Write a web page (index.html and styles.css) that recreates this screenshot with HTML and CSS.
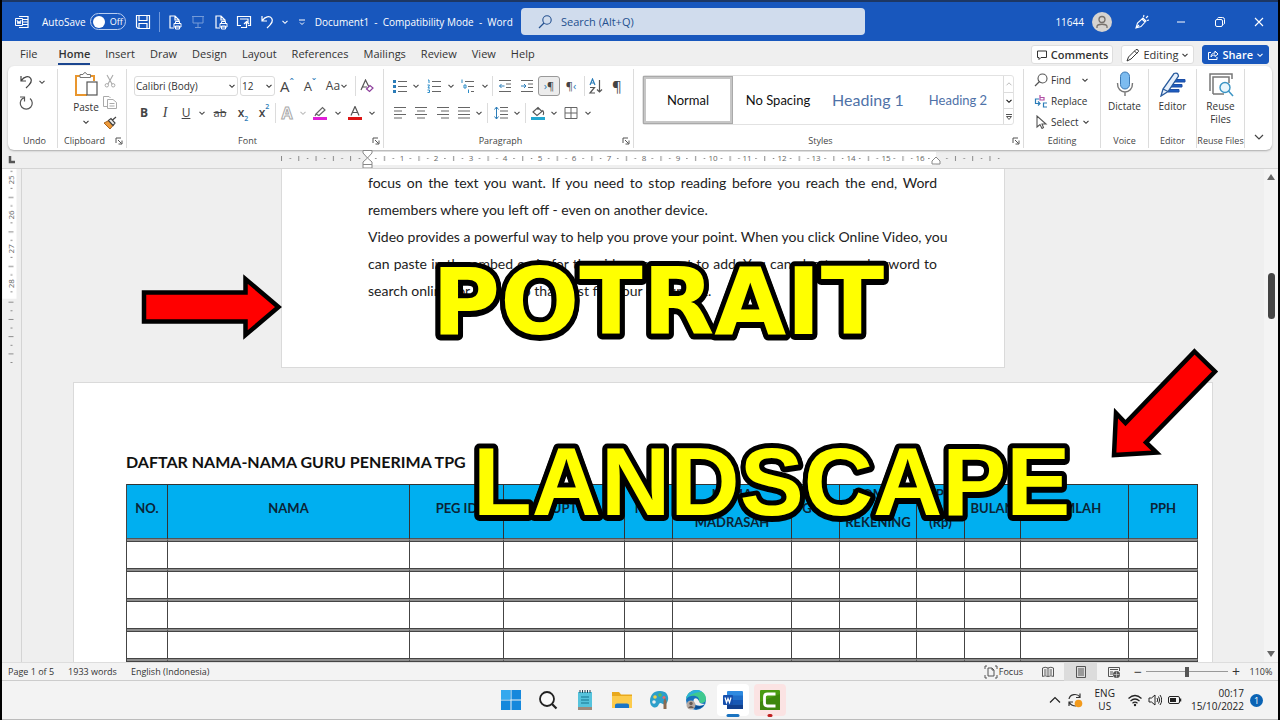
FILE: index.html
```html
<!DOCTYPE html>
<html lang="en">
<head>
<meta charset="utf-8">
<title>Document1 - Compatibility Mode - Word</title>
<link rel="stylesheet" href="styles.css">
</head>
<body>
<svg class="defs" aria-hidden="true">
  <symbol id="chev" viewBox="0 0 8 8"><path d="M1.500 2.800 4 5.300 6.500 2.800" fill="none" stroke="currentColor" stroke-width="1.100"/></symbol>
  <symbol id="launch" viewBox="0 0 8 8"><path d="M1 6V1H6M3 3 6.500 6.500M7 3.500V7H3.500" fill="none" stroke="#555"/></symbol>
  <symbol id="undo" viewBox="0 0 16 16"><path d="M3 2V7H8M3.300 6.600C6 2.500 10.500 1.500 12.700 4.300 14.600 7 13 9.500 8 14" fill="none" stroke="currentColor" stroke-width="1.200"/></symbol>
  <symbol id="page-print" viewBox="0 0 16 16"><path d="M7 14H3V2H8L12 6V8M8 2V6H12" fill="none" stroke="currentColor" stroke-width="1.200"/><path d="M7 9.500H14V13H7ZM8.500 9V7.500H12.500V9M8.500 12H12.500V15H8.500Z" fill="#1857bd" stroke="currentColor"/></symbol>
</svg>
<div class="window">
  <header class="titlebar">
    <div class="title-left">
      <svg class="i16" viewBox="0 0 16 16"><path d="M5 2.500H14V13.500H5M8 5.500H14M8 8H14M8 10.500H14" fill="none" stroke="#fff" stroke-width="1.200"/><path d="M1.500 4.500H8.500V11.500H1.500Z" fill="#1857bd" stroke="#fff"/><path d="M3 6 4 10 5 7 6 10 7 6" fill="none" stroke="#fff"/></svg>
      <label class="autosave">AutoSave<span class="toggle"><input type="checkbox" role="switch"><i></i>Off</span></label>
      <button class="tb" aria-label="Save"><svg class="i16" viewBox="0 0 16 16"><path d="M1.500 1.500H14.500V14.500H3L1.500 13ZM4 1.500V6.500H12V1.500M4 14V9.500H12V14" fill="none" stroke="#fff" stroke-width="1.200"/></svg></button>
      <span class="tsep"></span>
      <button class="tb" aria-label="Quick print"><svg class="i16"><use href="#page-print"/></svg></button>
      <button class="tb dim" aria-label="Present"><svg class="i16" viewBox="0 0 16 16"><path d="M2 2.500H14M3 2.500V9H13V2.500M8 9V13M5 13.500H11" fill="none" stroke="#fff"/></svg></button>
      <button class="tb" aria-label="Print preview"><svg class="i16"><use href="#page-print"/></svg></button>
      <button class="tb" aria-label="Switch window"><svg class="i16" viewBox="0 0 16 16"><path d="M5 11.500H1.500V2.500H14.500V11.500H12M4 5H12V9M5 13.500H10.500V8M8 10 10.500 7.500 13 10" fill="none" stroke="#fff" stroke-width="1.200"/></svg></button>
      <button class="tb" aria-label="Undo"><svg class="i16"><use href="#undo"/></svg></button>
      <button class="tb narrow" aria-label="Undo list"><svg class="i8"><use href="#chev"/></svg></button>
      <button class="tb" aria-label="Customize toolbar"><svg class="i8" viewBox="0 0 8 8"><path d="M1 2H7M2 4.500 4 6.500 6 4.500" fill="none" stroke="#fff"/></svg></button>
      <span class="doc-title">Document1&nbsp; -&nbsp; Compatibility Mode&nbsp; -&nbsp; Word</span>
    </div>
    <label class="search"><svg class="i16" viewBox="0 0 16 16"><circle cx="10" cy="6" r="4.200" fill="none" stroke="#24508f" stroke-width="1.100"/><path d="M7 9 2 14" stroke="#24508f" stroke-width="1.200"/></svg><input type="search" placeholder="Search (Alt+Q)" aria-label="Search"></label>
    <div class="title-right">
      <span class="user">11644</span>
      <svg class="avatar" viewBox="0 0 20 20"><circle cx="10" cy="10" r="10" fill="#d6d3d0"/><circle cx="10" cy="7.500" r="3" fill="none" stroke="#77716c" stroke-width="1.300"/><path d="M5 16V14.500C5 11.500 15 11.500 15 14.500V16" fill="none" stroke="#77716c" stroke-width="1.300"/></svg>
      <button class="win" aria-label="Coming soon"><svg class="i16" viewBox="0 0 16 16"><path d="M2 14 3.500 9 9 4 12 7 7 12.500ZM2 14 5 11M8 5 11 8M9.500 3 10 1M12 4 14 2M13 6.500 15 6" fill="none" stroke="#fff" stroke-width="1.100"/></svg></button>
      <button class="win" aria-label="Minimize"><svg class="i10" viewBox="0 0 10 10"><path d="M1 5H9" stroke="#fff"/></svg></button>
      <button class="win" aria-label="Restore"><svg class="i10" viewBox="0 0 10 10"><rect x=".5" y="2.500" width="7" height="7" rx="1.500" fill="none" stroke="#fff"/><path d="M2.500 1.500C3 .5 3 .5 4 .5H7.500Q9.500 .5 9.500 2.500V6Q9.500 7 8.500 7.500" fill="none" stroke="#fff"/></svg></button>
      <button class="win" aria-label="Close"><svg class="i10" viewBox="0 0 10 10"><path d="M1 1 9 9M9 1 1 9" stroke="#fff" stroke-width="1.100"/></svg></button>
    </div>
  </header>

  <nav class="tabs">
    <button>File</button><button class="active">Home</button><button>Insert</button><button>Draw</button><button>Design</button><button>Layout</button><button>References</button><button>Mailings</button><button>Review</button><button>View</button><button>Help</button>
    <div class="tab-actions">
      <button class="pill strong"><svg class="i12" viewBox="0 0 12 12"><path d="M1.500 2H10.500V8.500H5L3 10.500V8.500H1.500Z" fill="none" stroke="#333"/></svg>Comments</button>
      <button class="pill"><svg class="i14" viewBox="0 0 14 14"><path d="M1 13 2.500 9 10 1.500Q12.500 1 12.500 3.500L5 11ZM8.500 3 11 5.500" fill="none" stroke="#333"/></svg>Editing<svg class="i8"><use href="#chev"/></svg></button>
      <button class="pill share"><svg class="i12" viewBox="0 0 12 12"><path d="M4 3.500H1.500V10.500H10V8M4 8C4 5 6 4 8 4V2L11 5 8 7.500V6C6 6 5 6.500 4 8Z" fill="none" stroke="#fff"/></svg>Share<svg class="i8"><use href="#chev"/></svg></button>
    </div>
  </nav>

  <section class="ribbon">
    <div class="group g-undo">
      <div class="body col">
        <div class="line"><button class="ic" aria-label="Undo"><svg class="i16"><use href="#undo"/></svg></button><button class="ic" aria-label="Undo list"><svg class="i8"><use href="#chev"/></svg></button></div>
        <div class="line"><button class="ic" aria-label="Repeat"><svg class="i16" viewBox="0 0 16 16"><path d="M2 2H6.500V6.500M12 3.500A6 6 0 1 1 4.500 3.500L6.500 3" fill="none" stroke="#555" stroke-width="1.200"/></svg></button></div>
      </div>
      <div class="name">Undo</div>
    </div>
    <div class="group g-clip">
      <div class="body row">
        <button class="big"><svg class="i26" viewBox="0 0 26 26"><path d="M8 5H3V24H14M18 5H21V10" fill="none" stroke="#e9962e" stroke-width="2"/><path d="M7 6.500V3.500H10Q12 -.5 14 3.500H17.500V6.500Z" fill="#fff" stroke="#777"/><rect x="14" y="11" width="10" height="13" fill="#fff" stroke="#555" stroke-width="1.200"/></svg><span>Paste</span><svg class="i8"><use href="#chev"/></svg></button>
        <div class="clip-col">
          <button class="ic" aria-label="Cut"><svg class="i14" viewBox="0 0 14 14"><path d="M4 1 9 10M10 1 5 10" stroke="#aaa" stroke-width="1.100"/><circle cx="3.800" cy="11.300" r="1.700" fill="none" stroke="#aaa"/><circle cx="10.200" cy="11.300" r="1.700" fill="none" stroke="#aaa"/></svg></button>
          <button class="ic" aria-label="Copy"><svg class="i14" viewBox="0 0 14 14"><path d="M4.500 11.500H.5V1.500H6L7.500 3M4.500 4.500H10L13.500 7.500V13.500H4.500ZM6.500 8.500H11.500M6.500 11H11.500" fill="none" stroke="#aaa"/></svg></button>
          <button class="ic" aria-label="Format painter"><svg class="i14" viewBox="0 0 14 14"><path d="M1 7 6 4.500 10 9.500 7 13Z" fill="#ee9a3a" stroke="#a8631b"/><path d="M5.500 4.500 8 2.500 12 7 10 9.500ZM9.500 4 13 1" fill="#eee" stroke="#444" stroke-width="1.200"/></svg></button>
        </div>
      </div>
      <div class="name has-launch">Clipboard<svg class="launch"><use href="#launch"/></svg></div>
    </div>
    <div class="group g-font">
      <div class="body col">
        <div class="line f1">
          <span class="combo"><select aria-label="Font"><option>Calibri (Body)</option></select><svg class="i8"><use href="#chev"/></svg></span>
          <span class="combo"><select aria-label="Font size"><option>12</option></select><svg class="i8"><use href="#chev"/></svg></span>
          <button class="ic t15">A<sup>ˆ</sup></button><button class="ic t13">A<sup>ˇ</sup></button>
          <button class="ic">Aa<svg class="i8"><use href="#chev"/></svg></button><span class="sep"></span>
          <button class="ic" aria-label="Clear formatting"><svg class="i14" viewBox="0 0 14 14"><path d="M1 11 5.500 1 9 8M2.500 8H7" fill="none" stroke="#555" stroke-width="1.200"/><path d="M6.500 10 10 6.500 13 9 9.500 12.500Z" fill="#fff" stroke="#8d3f9c" stroke-width="1.200"/></svg></button>
        </div>
        <div class="line f2">
          <button class="ic"><b>B</b></button><button class="ic serif"><em>I</em></button><button class="ic"><u>U</u></button><button class="ic" aria-label="Underline list"><svg class="i8"><use href="#chev"/></svg></button>
          <button class="ic"><s>ab</s></button><button class="ic semi">x<sub>2</sub></button><button class="ic semi">x<sup>2</sup></button><span class="sep"></span>
          <button class="ic outline">A</button><button class="ic pale" aria-label="Effects list"><svg class="i8"><use href="#chev"/></svg></button>
          <button class="ic" aria-label="Highlight"><svg class="i14" viewBox="0 0 14 14"><path d="M3 8 9.500 1.500 12 4 6 9.500ZM3 8 2 10" fill="none" stroke="#666" stroke-width="1.200"/><path d="M0 11H14V14H0Z" fill="#e01ed8"/></svg></button><button class="ic" aria-label="Highlight list"><svg class="i8"><use href="#chev"/></svg></button>
          <button class="ic" aria-label="Font color"><svg class="i14" viewBox="0 0 14 14"><path d="M3 9.500 7 .5 11 9.500M4.500 6.500H9.500" fill="none" stroke="#555" stroke-width="1.200"/><path d="M0 11H14V14H0Z" fill="#dc1414"/></svg></button><button class="ic" aria-label="Color list"><svg class="i8"><use href="#chev"/></svg></button>
        </div>
      </div>
      <div class="name has-launch">Font<svg class="launch"><use href="#launch"/></svg></div>
    </div>
    <div class="group g-para">
      <div class="body col">
        <div class="line p1">
          <button class="ic" aria-label="Bullets"><svg class="i14" viewBox="0 0 14 14"><path d="M5 2.500H14M5 7.500H14M5 12.500H14" stroke="#666"/><path d="M0 1H3V4H0ZM0 6H3V9H0ZM0 11H3V14H0Z" fill="#2b7cb8"/></svg></button><button class="ic" aria-label="Bullets list"><svg class="i8"><use href="#chev"/></svg></button>
          <button class="ic" aria-label="Numbering"><svg class="i14" viewBox="0 0 14 14"><path d="M5 2.500H14M5 7.500H14M5 12.500H14" stroke="#666"/><path d="M1 1H2V4M.5 6H2.500L1 9H3M.5 11H2.500V13.500H.5" fill="none" stroke="#2b8cc8"/></svg></button><button class="ic" aria-label="Numbering list"><svg class="i8"><use href="#chev"/></svg></button>
          <button class="ic" aria-label="Multilevel"><svg class="i14" viewBox="0 0 14 14"><path d="M4 2.500H13M7 7.500H13M10 12.500H13" stroke="#666"/><path d="M1 .5V4M3 6H5V9H3ZM7.500 10.500V14" fill="none" stroke="#2b8cc8"/></svg></button><button class="ic" aria-label="Multilevel list"><svg class="i8"><use href="#chev"/></svg></button>
          <span class="sep"></span>
          <button class="ic" aria-label="Decrease indent"><svg class="i14" viewBox="0 0 14 14"><path d="M1 1.500H13M8 5H13M8 8.500H13M1 12.500H13" stroke="#666"/><path d="M6.500 7H1.500M3.500 5 1.500 7 3.500 9" fill="none" stroke="#2b7cb8"/></svg></button>
          <button class="ic" aria-label="Increase indent"><svg class="i14" viewBox="0 0 14 14"><path d="M1 1.500H13M8 5H13M8 8.500H13M1 12.500H13" stroke="#666"/><path d="M1 7H6M4 5 6 7 4 9" fill="none" stroke="#2b7cb8"/></svg></button>
          <button class="ic pressed"><span class="blue">›</span>¶</button>
          <button class="ic small">¶<span class="blue">‹</span></button><span class="sep"></span>
          <button class="ic" aria-label="Sort"><svg class="i16" viewBox="0 0 16 16"><path d="M2 7 4.500 1 7 7M3 5H6" fill="none" stroke="#2b7cb8" stroke-width="1.200"/><path d="M2 9.500H6.500L2 15H7M11.500 2V14M9 11.500 11.500 14 14 11.500" fill="none" stroke="#555" stroke-width="1.200"/></svg></button>
          <button class="ic t15">¶</button>
        </div>
        <div class="line p2">
          <button class="ic" aria-label="Align left"><svg class="i14" viewBox="0 0 14 14"><path d="M1 1.500H13M1 5H9M1 8.500H13M1 12H9" stroke="#666"/></svg></button>
          <button class="ic" aria-label="Center"><svg class="i14" viewBox="0 0 14 14"><path d="M1 1.500H13M3 5H11M1 8.500H13M3 12H11" stroke="#666"/></svg></button>
          <button class="ic" aria-label="Align right"><svg class="i14" viewBox="0 0 14 14"><path d="M1 1.500H13M5 5H13M1 8.500H13M5 12H13" stroke="#666"/></svg></button>
          <button class="ic" aria-label="Justify"><svg class="i14" viewBox="0 0 14 14"><path d="M1 1.500H13M1 5H13M1 8.500H13M1 12H13" stroke="#666"/></svg></button><button class="ic" aria-label="Justify list"><svg class="i8"><use href="#chev"/></svg></button>
          <span class="sep"></span>
          <button class="ic" aria-label="Line spacing"><svg class="i14" viewBox="0 0 14 14"><path d="M6 1.500H14M6 5H14M6 8.500H14M6 12H14" stroke="#666"/><path d="M2.500 1V13M.5 3.500 2.500 1 4.500 3.500M.5 10.500 2.500 13 4.500 10.500" fill="none" stroke="#2b7cb8"/></svg></button><button class="ic" aria-label="Spacing list"><svg class="i8"><use href="#chev"/></svg></button>
          <span class="sep"></span>
          <button class="ic" aria-label="Shading"><svg class="i14" viewBox="0 0 14 14"><path d="M2 6 7 1.500 11 5.500 6 9.500ZM7 1V4M11.500 4Q13.500 7 12 9" fill="none" stroke="#555" stroke-width="1.100"/><path d="M0 11H14V14H0Z" fill="#22a7d0"/></svg></button><button class="ic" aria-label="Shading list"><svg class="i8"><use href="#chev"/></svg></button>
          <button class="ic" aria-label="Borders"><svg class="i14" viewBox="0 0 14 14"><path d="M1 1.500H13V12.500H1ZM7 1.500V12.500M1 7H13" fill="none" stroke="#666"/></svg></button><button class="ic" aria-label="Borders list"><svg class="i8"><use href="#chev"/></svg></button>
        </div>
      </div>
      <div class="name has-launch">Paragraph<svg class="launch"><use href="#launch"/></svg></div>
    </div>
    <div class="group g-styles">
      <div class="body row">
        <div class="gallery">
          <button class="sel">Normal</button><button>No Spacing</button><button class="h1">Heading 1</button><button class="h2">Heading 2</button>
          <div class="spin"><button class="pale" aria-label="Up"><svg class="i8" viewBox="0 0 8 8"><path d="M1.500 5.300 4 2.800 6.500 5.300" fill="none" stroke="currentColor"/></svg></button><button aria-label="Down"><svg class="i8"><use href="#chev"/></svg></button><button aria-label="More"><svg class="i8" viewBox="0 0 8 8"><path d="M1 1.500H7M1.500 3.500H6.500L4 6.500Z" fill="none" stroke="#555"/></svg></button></div>
        </div>
      </div>
      <div class="name has-launch">Styles<svg class="launch"><use href="#launch"/></svg></div>
    </div>
    <div class="group g-edit">
      <div class="body col list">
        <button><svg class="i14" viewBox="0 0 14 14"><circle cx="8.500" cy="5.500" r="4.500" fill="none" stroke="#555" stroke-width="1.100"/><path d="M5.500 8.500 1 13" stroke="#555" stroke-width="1.200"/></svg>Find<svg class="i8 apart"><use href="#chev"/></svg></button>
        <button><svg class="i14" viewBox="0 0 14 14"><path d="M6 1V6H10V3.500H6" fill="none" stroke="#b04fa6" stroke-width="1.200"/><path d="M5 5H1.500V9.500H6M4 7.500 6 9.500 4 11.500M13 9H9.500V13H13" fill="none" stroke="#2b7cb8" stroke-width="1.200"/></svg>Replace</button>
        <button><svg class="i14" viewBox="0 0 14 14"><path d="M3 1V12L6 9.500 8 13.500 9.500 12.500 8 9H12Z" fill="none" stroke="#555" stroke-width="1.100"/></svg>Select<svg class="i8"><use href="#chev"/></svg></button>
      </div>
      <div class="name">Editing</div>
    </div>
    <div class="group g-tool">
      <div class="body col"><button class="big"><svg class="i26" viewBox="0 0 26 26"><rect x="8.500" y="1" width="9" height="17" rx="4.500" fill="#7dbcf0" stroke="#3b79b5"/><path d="M5.500 12C5 24 21 24 20.500 12M13 21V25" fill="none" stroke="#777" stroke-width="1.400"/></svg><span>Dictate</span></button></div>
      <div class="name">Voice</div>
    </div>
    <div class="group g-tool">
      <div class="body col"><button class="big"><svg class="i26" viewBox="0 0 26 26"><path d="M12 8.500H25V11H13ZM11 13.500H22V16H11ZM9 18.500H19V21H8Z" fill="#1d5cc0" stroke="#1d4ea5"/><path d="M1 25 3 18 14 2.500Q18 1 18.500 5L8 20.500ZM3 18 8 20.500" fill="#e7f0fb" stroke="#285a9c" stroke-width="1.300"/></svg><span>Editor</span></button></div>
      <div class="name">Editor</div>
    </div>
    <div class="group g-tool">
      <div class="body col"><button class="big"><svg class="i26" viewBox="0 0 26 26"><path d="M2 20V3H24V8M2 3H24M5 23V6H21V12M5 23H16" fill="none" stroke="#777" stroke-width="1.500"/><circle cx="17" cy="16.500" r="5" fill="#eaf6fc" stroke="#3a94c4" stroke-width="1.400"/><path d="M20.500 20 25 25" stroke="#3a94c4" stroke-width="1.500"/></svg><span>Reuse<br>Files</span></button></div>
      <div class="name">Reuse Files</div>
    </div>
    <button class="collapse" aria-label="Collapse ribbon"><svg class="i10" viewBox="0 0 10 10"><path d="M1 3 5 7 9 3" fill="none" stroke="#444" stroke-width="1.200"/></svg></button>
  </section>

  <div class="hruler">
    <svg class="corner" viewBox="0 0 20 18"><path d="M8 6V12H13" fill="none" stroke="#555" stroke-width="2.500"/></svg>
    <div class="hscale">
      <svg viewBox="0 0 724 18" width="724" height="18">
        <defs><pattern id="cm" x="86" width="34.570" height="18" patternUnits="userSpaceOnUse"><path d="M8 8.500H9.500M25.500 8.500H27" stroke="#888"/><path d="M17.500 6V11" stroke="#888"/></pattern>
        <pattern id="edge" x="0" width="17.280" height="18" patternUnits="userSpaceOnUse"><path d="M.5 6V11" stroke="#888"/><path d="M8.500 8.500H10" stroke="#888"/></pattern></defs>
        <rect x="86" y="2" width="569" height="13" fill="#fff"/>
        <rect x="0" width="82" height="18" fill="url(#edge)"/><rect x="92" width="558" height="18" fill="url(#cm)"/><rect x="660" width="59" height="18" fill="url(#edge)"/>
        <g class="nums"><text x="121" y="11">1</text><text x="155" y="11">2</text><text x="190" y="11">3</text><text x="224" y="11">4</text><text x="259" y="11">5</text><text x="293" y="11">6</text><text x="328" y="11">7</text><text x="363" y="11">8</text><text x="397" y="11">9</text><text x="432" y="11">10</text><text x="466" y="11">11</text><text x="501" y="11">12</text><text x="535" y="11">13</text><text x="570" y="11">14</text><text x="605" y="11">15</text><text x="639" y="11">16</text></g>
        <path d="M82 .5H91V3L86.500 8 82 3ZM82 18V12L86.500 8 91 12V18ZM82 14.500H91M651 14V11L655 7 659 11V14Z" fill="#fff" stroke="#888"/>
      </svg>
    </div>
  </div>

  <div class="work">
    <svg class="vruler" viewBox="0 0 20 494" preserveAspectRatio="xMidYMin slice">
      <defs><pattern id="vcm" y="11" width="20" height="34.570" patternUnits="userSpaceOnUse"><path d="M9 8.500H11M9 26H11M7 17.500H12" stroke="#888"/></pattern><pattern id="vedge" y="132" width="20" height="17.280" patternUnits="userSpaceOnUse"><path d="M7 1.500H12M9 10H11" stroke="#888"/></pattern></defs>
      <rect x="1" width="14" height="130" fill="#fff"/><rect width="20" height="128" fill="url(#vcm)"/><rect y="131" width="20" height="64" fill="url(#vedge)"/>
      <g class="nums"><text transform="translate(13 11) rotate(-90)">25</text><text transform="translate(13 46) rotate(-90)">26</text><text transform="translate(13 80) rotate(-90)">27</text><text transform="translate(13 115) rotate(-90)">28</text></g>
    </svg>
    <main class="canvas">
      <article class="page portrait">
        <p class="full">focus on the text you want. If you need to stop reading before you reach the end, Word</p>
        <p>remembers where you left off - even on another device.</p>
        <p class="full">Video provides a powerful way to help you prove your point. When you click Online Video, you</p>
        <p class="full">can paste in the embed code for the video you want to add. You can also type a keyword to</p>
        <p>search online for the video that best fits your document.</p>
      </article>
      <article class="page landscape">
        <h1>DAFTAR NAMA-NAMA GURU PENERIMA TPG</h1>
        <table>
          <colgroup><col class="c41"><col class="c242"><col class="c94"><col class="c121"><col class="c48"><col class="c119"><col class="c48"><col class="c77"><col class="c48"><col class="c56"><col class="c108"><col class="c69"></colgroup>
          <thead><tr><th>NO.</th><th>NAMA</th><th>PEG ID</th><th>NUPTK</th><th>NRG</th><th><span>NAMA</span><span>MADRASAH</span></th><th>GOL</th><th><span>NOMOR</span><span>REKENING</span></th><th><span>TPG</span><span>(Rp)</span></th><th>BULAN</th><th>JUMLAH</th><th>PPH</th></tr></thead>
          <tbody>
            <tr><td></td><td></td><td></td><td></td><td></td><td></td><td></td><td></td><td></td><td></td><td></td><td></td></tr>
            <tr><td></td><td></td><td></td><td></td><td></td><td></td><td></td><td></td><td></td><td></td><td></td><td></td></tr>
            <tr><td></td><td></td><td></td><td></td><td></td><td></td><td></td><td></td><td></td><td></td><td></td><td></td></tr>
            <tr><td></td><td></td><td></td><td></td><td></td><td></td><td></td><td></td><td></td><td></td><td></td><td></td></tr>
            <tr><td></td><td></td><td></td><td></td><td></td><td></td><td></td><td></td><td></td><td></td><td></td><td></td></tr>
          </tbody>
        </table>
      </article>
      <svg class="callout one" width="470" height="100"><text x="12" y="83">POTRAIT</text></svg>
      <svg class="callout two" width="620" height="100"><text x="11" y="83">LANDSCAPE</text></svg>
      <svg class="arrow a1" width="142" height="70" viewBox="0 0 142 70"><path d="M3 20.500H104.500V7L137.500 35 104.500 63V49.500H3Z" fill="#f00" stroke="#000" stroke-width="4.500"/></svg>
      <svg class="arrow a2" width="112" height="114" viewBox="0 0 112 114"><path d="M86.500 4.500 107 24.500 38 95.500 48.500 105.500 6 108 8 66 17.500 76Z" fill="#f00" stroke="#000" stroke-width="4.500"/></svg>
    </main>
    <div class="scroll"><i class="up"></i><i class="thumb"></i><i class="down"></i></div>
  </div>

  <footer class="status">
    <span>Page 1 of 5</span><span>1933 words</span><span>English (Indonesia)</span>
    <div class="views">
      <button class="focus"><svg class="i14" viewBox="0 0 14 14"><path d="M3 1H1V4M11 1H13V4M3 13H1V10M11 13H13V10M4 3H8L10 5V11H4ZM8 3V5H10" fill="none" stroke="#555"/></svg>Focus</button>
      <button class="view" aria-label="Read mode"><svg class="i12" viewBox="0 0 12 12"><path d="M6 2Q3 .5 .5 2V10.500Q3 9 6 10.500 9 9 11.500 10.500V2Q9 .5 6 2V10M2 4H4.500M2 6H4.500M2 8H4.500M7.500 4H10M7.500 6H10M7.500 8H10" fill="none" stroke="#555"/></svg></button>
      <button class="view on" aria-label="Print layout"><svg class="i12" viewBox="0 0 12 12"><path d="M1.500 .5H10.500V11.500H1.500ZM3 3H9M3 5H9M3 7H9M3 9H9" fill="none" stroke="#555"/></svg></button>
      <button class="view" aria-label="Web layout"><svg class="i12" viewBox="0 0 12 12"><path d="M5 10.500H.5V1.500H11.500V5M2 3.500H10M2 6H5M2 8H5" fill="none" stroke="#555"/><circle cx="8.500" cy="8.500" r="3.500" fill="#555"/><path d="M5.500 8.500H11.500M8.500 5.500V11.500" stroke="#ddd" stroke-width=".6"/></svg></button>
      <button class="zoomb">−</button><input class="zoom" type="range" min="0" max="100" value="50" aria-label="Zoom"><button class="zoomb">+</button>
      <span class="pct">110%</span>
    </div>
  </footer>

  <footer class="taskbar">
    <span></span>
    <div class="apps">
      <button aria-label="Start"><svg class="i20" viewBox="0 0 20 20"><path d="M0 0H9.500V9.500H0ZM10.500 0H20V9.500H10.500ZM0 10.500H9.500V20H0ZM10.500 10.500H20V20H10.500Z" fill="#1688dc"/><path d="M0 0H9.500V9.500H0Z" fill="#35a8ee"/></svg></button>
      <button aria-label="Search"><svg class="i20" viewBox="0 0 20 20"><circle cx="9" cy="9" r="7" fill="#fafafa" stroke="#222" stroke-width="1.800"/><path d="M14 14 18.500 18.500" stroke="#222" stroke-width="2.200"/></svg></button>
      <button aria-label="Notepad"><svg class="i20" viewBox="0 0 20 20"><path d="M3 2H17V19H3Z" fill="#55c3dc"/><path d="M3 17H17V20H3Z" fill="#9c8a7c"/><path d="M6 7H14M6 10H14M6 13H14" stroke="#16778f" stroke-width="1.200"/><path d="M5 0V3M7.500 0V3M10 0V3M12.500 0V3M15 0V3" stroke="#245" /></svg></button>
      <button aria-label="File Explorer"><svg class="i20" viewBox="0 0 20 20"><path d="M0 2H7L9 4.500H20V18H0Z" fill="#e9a91d"/><path d="M0 6H20V18H0Z" fill="#fccb4c"/><path d="M3 18V15Q3 13.500 5 13.500H15Q17 13.500 17 15V18Z" fill="#1975c7"/></svg></button>
      <button aria-label="Paint"><svg class="i20" viewBox="0 0 20 20"><path d="M10 1C20 0 21 10 17 14 14 16 12 11 10 14 8 20 1 18 1 11 1 5 5 1 10 1Z" fill="#2c9fca"/><circle cx="6" cy="7" r="1.800" fill="#f2d04b"/><circle cx="11" cy="5" r="1.800" fill="#5cb85c"/><circle cx="5" cy="12" r="1.800" fill="#e8eef2"/><circle cx="15" cy="7.500" r="1.500" fill="#e66"/><path d="M14.500 19V11L16 8 17.500 11V19Z" fill="#8a6a50"/></svg></button>
      <button aria-label="Edge"><svg class="i20" viewBox="0 0 20 20"><circle cx="10" cy="10" r="10" fill="#1672bf"/><path d="M0 9C2-3 20-2 20 9 20 14 13 14 13 11 14 5 4 4 0 9Z" fill="#3fc98f"/><path d="M0 9C2 0 12-2 16 2 9 2 5 4 0 9Z" fill="#2bb0dc"/><path d="M8 9C6 15 11 18 18 15 14 20 7 20 6 15Z" fill="#0c4d93"/><path d="M13 11Q11 7 8 9 6 13 10 15 15 17 19 14 13 14 13 11Z" fill="#f2f2f2"/><circle cx="5" cy="15" r="4.500" fill="#b4aaa4"/><circle cx="5" cy="13.500" r="1.700" fill="#685c55"/><path d="M2 18Q5 14 8 18Z" fill="#685c55"/></svg></button>
      <button class="open" aria-label="Word"><svg class="i20" viewBox="0 0 20 20"><rect x="4" y="1" width="16" height="18" rx="1" fill="#2e8ae0"/><path d="M4 5.500H20V10H4Z" fill="#1f6fca"/><path d="M4 10H20V14.500H4Z" fill="#1858b5"/><path d="M4 14.500H20V19H4Z" fill="#12408e"/><rect y="5" width="10" height="10" rx="1" fill="#1650ad"/><path d="M2 7.500 3.500 12.500 5 8.500 6.500 12.500 8 7.500" fill="none" stroke="#fff" stroke-width="1.200"/></svg></button>
      <button class="rec" aria-label="Camtasia"><svg class="i20" viewBox="0 0 20 20"><rect width="20" height="20" rx="1" fill="#4a9b12"/><path d="M0 12 20 4V20H0Z" fill="#3d870d"/><path d="M15.500 4H7.500Q4.500 4 4.500 7V13Q4.500 16 7.500 16H15.500" fill="none" stroke="#fff" stroke-width="2.800"/></svg></button>
    </div>
    <div class="tray">
      <svg class="i12" viewBox="0 0 12 12"><path d="M1 8.500 6 3.500 11 8.500" fill="none" stroke="#222" stroke-width="1.200"/></svg>
      <svg class="i16" viewBox="0 0 16 16"><path d="M2 7C3 2 10 1 13 5M13 1.500V5.500H9M13 9M2 14V10H6M2 10C4 14 7 14 9 14" fill="none" stroke="#333" stroke-width="1.200"/><circle cx="11.500" cy="11.500" r="3.800" fill="#f29a1c"/></svg>
      <span class="lang">ENG<br>US</span>
      <svg class="i14" viewBox="0 0 14 14"><path d="M.5 5.500Q7-.5 13.500 5.500M2.500 8Q7 4 11.500 8M4.500 10.300Q7 8 9.500 10.300" fill="none" stroke="#222" stroke-width="1.200"/><circle cx="7" cy="12" r="1.200" fill="#222"/></svg>
      <svg class="i14" viewBox="0 0 14 14"><path d="M1 5H3.500L7 2V12L3.500 9H1ZM9 5Q10.500 7 9 9M10.500 3.500Q13 7 10.500 10.500M12 2Q15.500 7 12 12" fill="none" stroke="#222"/></svg>
      <svg class="i14" viewBox="0 0 14 14"><rect x=".5" y="3.500" width="11" height="7" rx="1.500" fill="none" stroke="#222"/><rect x="2" y="5" width="6" height="4" fill="#222"/><path d="M12.500 5.500V8.500" stroke="#222" stroke-width="1.500"/></svg>
      <span class="clock">00:17<br>15/10/2022</span>
      <span class="badge">1</span>
    </div>
  </footer>
</div>
</body>
</html>
```
FILE: styles.css
```css
* { box-sizing: border-box; }
body { margin: 0; background: #000; font: 10px/14px "Open Sans", "Noto Sans", sans-serif; color: #333; }
button { font: inherit; color: inherit; background: none; border: 0; padding: 0; margin: 0; display: inline-flex; align-items: center; justify-content: center; }
svg { flex: none; display: block; }
.defs { position: absolute; width: 0; height: 0; }
.i8 { width: 8px; height: 8px; }
.i10 { width: 10px; height: 10px; }
.i12 { width: 12px; height: 12px; }
.i14 { width: 14px; height: 14px; }
.i16 { width: 16px; height: 16px; }
.i20 { width: 20px; height: 20px; }
.i26 { width: 26px; height: 26px; }

.window { height: 100vh; display: flex; flex-direction: column; margin: 0 2px; background: #efefef; border-top: 2px solid #1d3763; border-bottom: 1px solid #bbb; overflow: hidden; }

.titlebar { flex: none; height: 39px; display: grid; grid-template-columns: 519fr 344fr 413fr; align-items: center; background: #1857bd; color: #fff; }
.title-left { display: flex; align-items: center; padding-left: 12px; white-space: nowrap; }
.autosave { display: flex; align-items: center; gap: 4px; margin: 0 6px 0 12px; }
.toggle { display: flex; align-items: center; gap: 5px; width: 36px; height: 17px; padding-left: 2px; border: 1px solid #b8cdf0; border-radius: 9px; font-size: 9px; }
.toggle input { position: absolute; opacity: 0; }
.toggle i { width: 12px; height: 12px; border-radius: 50%; background: #fff; }
.tb { width: 23px; height: 24px; }
.tb.narrow { width: 12px; }
.dim { opacity: .4; }
.tsep { width: 1px; height: 20px; margin: 0 4px; background: #6f98dc; }
.doc-title { margin-left: 1px; }
.search { display: flex; align-items: center; gap: 8px; height: 27px; padding-left: 16px; border-radius: 4px; background: #d0dced; }
.search input { flex: 1; min-width: 0; padding: 0; border: 0; background: none; outline: 0; font: 11px/16px "Open Sans", sans-serif; }
.search input::placeholder { color: #24508f; opacity: 1; }
.title-right { display: flex; align-items: center; justify-content: flex-end; }
.avatar { width: 20px; height: 20px; margin: 0 10px 0 8px; }
.win { width: 39px; height: 39px; }

.tabs { flex: none; height: 25px; display: flex; align-items: center; gap: 15px; padding: 2px 9px 0 18px; font-size: 11px; }
.tabs > button { height: 21px; border-bottom: 2px solid transparent; }
.tabs > .active { font-weight: 600; border-color: #1b468f; }
.tabs > button:nth-child(2) { margin-left: 6px; }
.tab-actions { margin-left: auto; display: flex; gap: 8px; }
.pill { height: 19px; gap: 3px; padding: 0 4px; border: 1px solid #dedede; border-radius: 3px; background: #fff; }
.strong, .share { font-weight: 600; }
.share { color: #fff; background: #1857bd; border-color: #1857bd; }

.ribbon { flex: none; height: 84px; display: flex; margin: 0 6px; padding: 3px 0 2px; background: #fff; border-radius: 6px; box-shadow: 0 1px 2px #aaa; }
.group { flex: none; display: flex; flex-direction: column; border-right: 1px solid #dcdcdc; }
.body { flex: 1; display: flex; }
.col { flex-direction: column; }
.name { display: flex; justify-content: center; align-items: center; position: relative; height: 14px; font-size: 9px; line-height: 14px; white-space: nowrap; color: #444; }
.has-launch { padding-right: 15px; }
.launch { position: absolute; right: 3px; top: 3px; width: 8px; height: 8px; }
.line { display: flex; align-items: center; height: 27px; }
.ic { height: 20px; color: #444; font-size: 12px; }
.g-undo { width: 50px; padding-left: 10px; }
.g-undo .line { height: 21px; gap: 4px; align-items: flex-start; }
.g-undo .name { padding-right: 6px; }
.g-clip { width: 69px; }
.row { justify-content: center; }
.g-clip .row { gap: 4px; justify-content: flex-end; padding: 2px 9px 0 0; }
.big { flex-direction: column; justify-content: flex-start; font-size: 10px; line-height: 13px; gap: 4px; }
.clip-col { display: flex; flex-direction: column; gap: 1px; }
.g-font { width: 257px; padding-left: 7px; }
.g-font .has-launch { padding-right: 22px; }
.g-para { width: 250px; padding-left: 6px; }
.g-para .has-launch { padding-right: 22px; }
.g-font .col, .g-para .col, .g-undo .col { padding-top: 3px; }
.f1 { display: grid; grid-template-columns: 106px 35px 24px 22px 32px 4px 20px; }
.f2 { display: grid; grid-template-columns: 20px 22px 20px 12px 24px 22px 20px 2px 22px 10px 24px 12px 22px 12px; }
.p1 { display: grid; grid-template-columns: 20px 12px 24px 10px 24px 10px 4px 22px 22px 22px 22px 4px 20px 22px; }
.p2 { display: grid; grid-template-columns: 20px 22px 22px 20px 10px 6px 22px 10px 6px 20px 12px 22px 12px; }
.combo { display: flex; align-items: center; height: 20px; border: 1px solid #dcdcdc; border-radius: 3px; padding: 0 1px; }
.f1 .combo:first-child { margin-right: 2px; }
.combo select { flex: 1; min-width: 0; appearance: none; border: 0; background: none; padding: 0; font: 10px/16px "Open Sans", sans-serif; color: #333; }
.sep { justify-self: center; width: 1px; height: 20px; background: #dcdcdc; }
.ic sup, .ic sub { font-size: 7px; line-height: 8px; color: #2b7cb8; }
.ic sup { align-self: flex-start; }
.ic sub { align-self: flex-end; }
.t15 { font-size: 15px; }
.t13 { font-size: 13px; }
.t15 sup, .t13 sup { font-size: 11px; line-height: 14px; }
.serif { font-family: "Liberation Serif", serif; font-size: 14px; }
.semi { font-weight: 600; }
.f2 s { font-size: 11px; }
.outline { font-size: 16px; font-weight: 700; color: #fff; -webkit-text-stroke: 1px #aaa; }
.pale { color: #bbb; }
.blue { color: #2b7cb8; }
.pressed { border: 1px solid #999; border-radius: 3px; background: #ececec; font-size: 11px; }
.small { font-size: 11px; }

.g-styles { flex: 1; padding: 0 9px 0 8px; }
.g-styles .name .launch { right: -6px; }
.g-styles .body { padding: 6px 0; }
.gallery { flex: 1; display: grid; grid-template-columns: repeat(4, 90px) 1fr; height: 50px; border: 1px solid #e2e2e2; border-radius: 3px; font: 13px/18px Lato, sans-serif; color: #111; }
.gallery .sel { border: 3px solid #c6c6c6; outline: 1px solid #aaa; outline-offset: -1px; }
.gallery .h1 { font-size: 16px; color: #4f72a8; }
.gallery .h2 { font-size: 13px; color: #4f72a8; }
.spin { display: grid; grid-template-rows: 1fr 1fr 1fr; border-left: 1px solid #dcdcdc; }
.spin button + button { border-top: 1px solid #dcdcdc; }
.g-edit { width: 77px; padding-left: 10px; }
.list { align-items: flex-start; }
.list button { height: 21px; gap: 3px; align-items: center; }
.apart { margin-left: 7px; }
.g-edit .name { padding-right: 10px; }
.g-tool { width: 48px; }
.g-tool .body { align-items: center; }
.g-tool .big { padding-top: 2px; gap: 3px; }
.collapse { width: 27px; align-items: flex-end; padding-bottom: 6px; }

.hruler { flex: none; height: 19px; display: flex; border-bottom: 1px solid #d4d4d4; }
.corner { width: 20px; height: 18px; }
.hscale { flex: 1; display: flex; justify-content: center; padding-right: 14px; overflow: hidden; }
.nums { font: 8px "Open Sans", sans-serif; fill: #666; text-anchor: middle; }
.work { flex: 1; min-height: 0; display: flex; }
.vruler { width: 20px; height: 100%; border-right: 1px solid #d4d4d4; }
.canvas { flex: 1; position: relative; display: flex; flex-direction: column; align-items: center; gap: 14px; overflow: hidden; }
.page { flex: none; background: #fff; border: 1px solid #dadada; }
.portrait { width: 724px; height: 199px; padding: 0 67px 0 86px; border-top: 0; font: 14px/27px Lato, sans-serif; color: #222; }
.portrait p { margin: 0; white-space: nowrap; }
.portrait .full { text-align: justify; text-align-last: justify; }
.landscape { width: 1140px; padding: 66px 15px 0 52px; color: #111; }
h1 { margin: 0 0 9px; font: 700 16px/26px Lato, sans-serif; color: #111; }
table { width: 1072px; table-layout: fixed; border-collapse: separate; border-spacing: 0; border-left: 1px solid #444; font: 700 13px/14px Lato, sans-serif; }
th { height: 55px; padding: 0 0 9px; background: #00aff0; border: solid #333; border-width: 1px 1px 0 0; box-shadow: inset 0 -1px #555; color: #0b2436; }
th span { display: block; }
th span + span { margin-top: 14px; }
td { height: 30px; padding: 0; border-right: 1px solid #444; border-top: 2px solid #8c8c8c; box-shadow: inset 0 1px #444, inset 0 -1px #444; }
.c41 { width: 41px; } .c242 { width: 242px; } .c94 { width: 94px; } .c121 { width: 121px; } .c48 { width: 48px; } .c119 { width: 119px; }
.c77 { width: 77px; } .c56 { width: 56px; } .c108 { width: 108px; } .c69 { width: 69px; }
.callout { position: absolute; overflow: visible; fill: #ff0; stroke: #000; stroke-width: 10px; stroke-linejoin: round; paint-order: stroke; font-weight: 700; filter: drop-shadow(0 1px 0 #000); }
.one { left: 398px; top: 82px; font-family: "DejaVu Sans", sans-serif; font-size: 93px; }
.two { left: 440px; top: 263px; font-family: "Liberation Sans", Arial, sans-serif; font-size: 96px; }
.arrow { position: absolute; }
.a1 { left: 119px; top: 103px; }
.a2 { left: 1086px; top: 178px; }
.scroll { width: 14px; display: flex; flex-direction: column; align-items: center; padding: 5px 0; background: #f4f4f4; }
.scroll .up { border: 4px solid transparent; border-top: 0; border-bottom: 6px solid #666; }
.scroll .down { margin-top: auto; border: 4px solid transparent; border-bottom: 0; border-top: 6px solid #666; }
.thumb { width: 7px; height: 46px; margin-top: 93px; border-radius: 4px; background: #444; }

.status { flex: none; height: 19px; display: flex; align-items: center; gap: 14px; padding-left: 6px; font-size: 9px; background: #f3f3f3; border-top: 1px solid #ddd; border-bottom: 1px solid #ccc; }
.views { margin-left: auto; display: flex; align-items: center; height: 18px; }
.focus { gap: 1px; margin-right: 8px; }
.view { width: 33px; height: 18px; }
.on { background: #dcdcdc; }
.zoomb { width: 16px; font-size: 14px; }
.zoom { appearance: none; width: 82px; height: 12px; margin: 0; background: linear-gradient(#999, #999) center / 100% 1px no-repeat; }
.zoom::-webkit-slider-thumb { appearance: none; width: 4px; height: 10px; background: #555; }
.pct { width: 34px; text-align: center; }

.taskbar { flex: none; height: 38px; display: grid; grid-template-columns: 1fr auto 1fr; align-items: center; background: #f3f3f3; }
.apps { display: flex; gap: 1px; }
.apps button { width: 36px; height: 36px; position: relative; }
.open::before, .rec::before { content: ""; position: absolute; inset: 2px; border-radius: 4px; background: #fff; }
.rec::before { background: #fbe3e3; }
.apps svg { position: relative; }
.open::after, .rec::after { content: ""; position: absolute; left: 50%; bottom: 1px; translate: -50%; width: 13px; height: 3px; border-radius: 2px; background: #1a73c0; }
.rec::after { width: 5px; background: #c02020; }
.tray { display: flex; align-items: center; justify-content: flex-end; gap: 6px; padding-right: 15px; font-size: 10px; line-height: 13px; color: #222; }
.lang { text-align: center; margin: 0 7px 0 6px; }
.clock { text-align: right; margin-left: 3px; }
.badge { width: 13px; height: 13px; border-radius: 50%; background: #0a63b4; color: #fff; font-size: 9px; line-height: 13px; text-align: center; }
```
